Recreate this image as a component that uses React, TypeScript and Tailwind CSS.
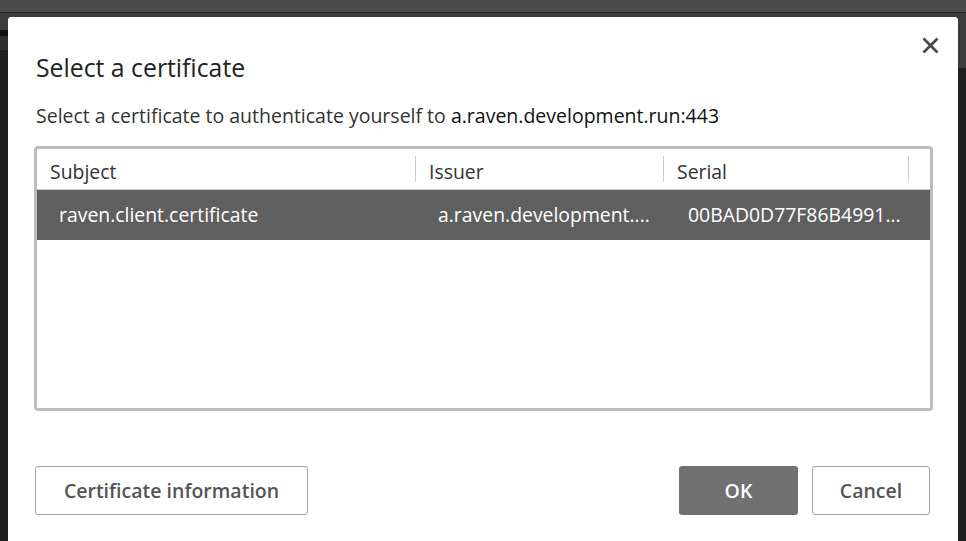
import React from 'react';

const font = { fontFamily: '"Open Sans", "Noto Sans", sans-serif' };

const columns = [
  { name: 'Subject', width: 'w-[379px]' },
  { name: 'Issuer', width: 'w-[248px]' },
  { name: 'Serial', width: 'w-[245px]' },
];

const CloseIcon: React.FC = () => (
  <svg width="17" height="17" viewBox="0 0 17 17" fill="none">
    <path d="M1.5 1.5 L15.5 15.5 M15.5 1.5 L1.5 15.5" stroke="#4a4a4a" strokeWidth="2.7" strokeLinecap="butt" />
  </svg>
);

export default function App() {
  return (
    <div className="w-[966px] h-[541px] overflow-hidden bg-[#1f1f1f] flex flex-col" style={font}>
      {/* Browser chrome behind the dialog */}
      <div className="h-[12px] bg-[#4a4a4a] shrink-0" />
      <div className="h-px bg-[#2b2b2b] shrink-0" />
      <div className="flex flex-1 min-h-0">
        <div className="w-[8px] flex flex-col shrink-0">
          <div className="h-[17px] bg-[#3c3c3c]" />
          <div className="h-[6px] bg-[#111111]" />
          <div className="h-[14px] bg-[#2e2e2e]" />
          <div className="flex-1 bg-[#1f1f1f]" />
        </div>

        {/* Dialog */}
        <div className="flex-1 flex flex-col">
          <div className="h-[4px] bg-[#3c3c3c] shrink-0" />
          <div className="flex-1 bg-white rounded-t-[3px] pl-[26px] pr-[25px] flex flex-col">
            <div className="flex justify-between items-start">
              <h1 className="ml-[2px] mt-[35px] text-[24.8px] leading-[30px] text-[#222222]">Select a certificate</h1>
              <button className="mt-[20px] mr-[-6px] p-0">
                <CloseIcon />
              </button>
            </div>

            <p className="ml-[2px] mt-[21px] text-[19.5px] leading-[26px] text-[#333333]">
              Select a certificate to authenticate yourself to{' '}
              <span className="text-[#111111]">a.raven.development.run:443</span>
            </p>

            {/* Certificate list */}
            <div className="mt-[17px] h-[265px] rounded-[4px] border-[3px] border-[#bdbdbd] flex flex-col">
              <div className="h-[41px] flex border-b border-[#cfcfcf] text-[19.4px] text-[#333333]">
                {columns.map((col) => (
                  <div key={col.name} className={`${col.width} flex items-center border-r border-[#cccccc] my-[7px] pl-[13px] pt-[5px]`}>
                    {col.name}
                  </div>
                ))}
              </div>
              <div className="h-[50px] flex items-center bg-[#5f5f5f] text-white text-[19.4px]">
                <div className="w-[379px] pl-[22px] truncate">raven.client.certificate</div>
                <div className="w-[248px] pl-[22px] truncate">a.raven.development....</div>
                <div className="w-[245px] pl-[24px] truncate">00BAD0D77F86B4991...</div>
              </div>
              <div className="flex-1" />
            </div>

            {/* Actions */}
            <div className="mt-[55px] flex items-center ml-[1px] mr-[3px]">
              <button className="w-[273px] h-[49px] rounded-[3px] border border-[#a3a3a3] bg-white text-[19.5px] font-semibold text-[#555555]">
                Certificate information
              </button>
              <div className="flex-1" />
              <button className="w-[119px] h-[49px] rounded-[3px] bg-[#717171] text-white text-[19.5px] font-semibold">
                OK
              </button>
              <button className="ml-[14px] w-[118px] h-[49px] rounded-[3px] border border-[#a3a3a3] bg-white text-[19.5px] font-semibold text-[#555555]">
                Cancel
              </button>
            </div>
          </div>
        </div>

        <div className="w-[8px] flex flex-col shrink-0">
          <div className="h-[55px] bg-[#3c3c3c]" />
          <div className="flex-1 bg-[#1e1e1e]" />
        </div>
      </div>
    </div>
  );
}
